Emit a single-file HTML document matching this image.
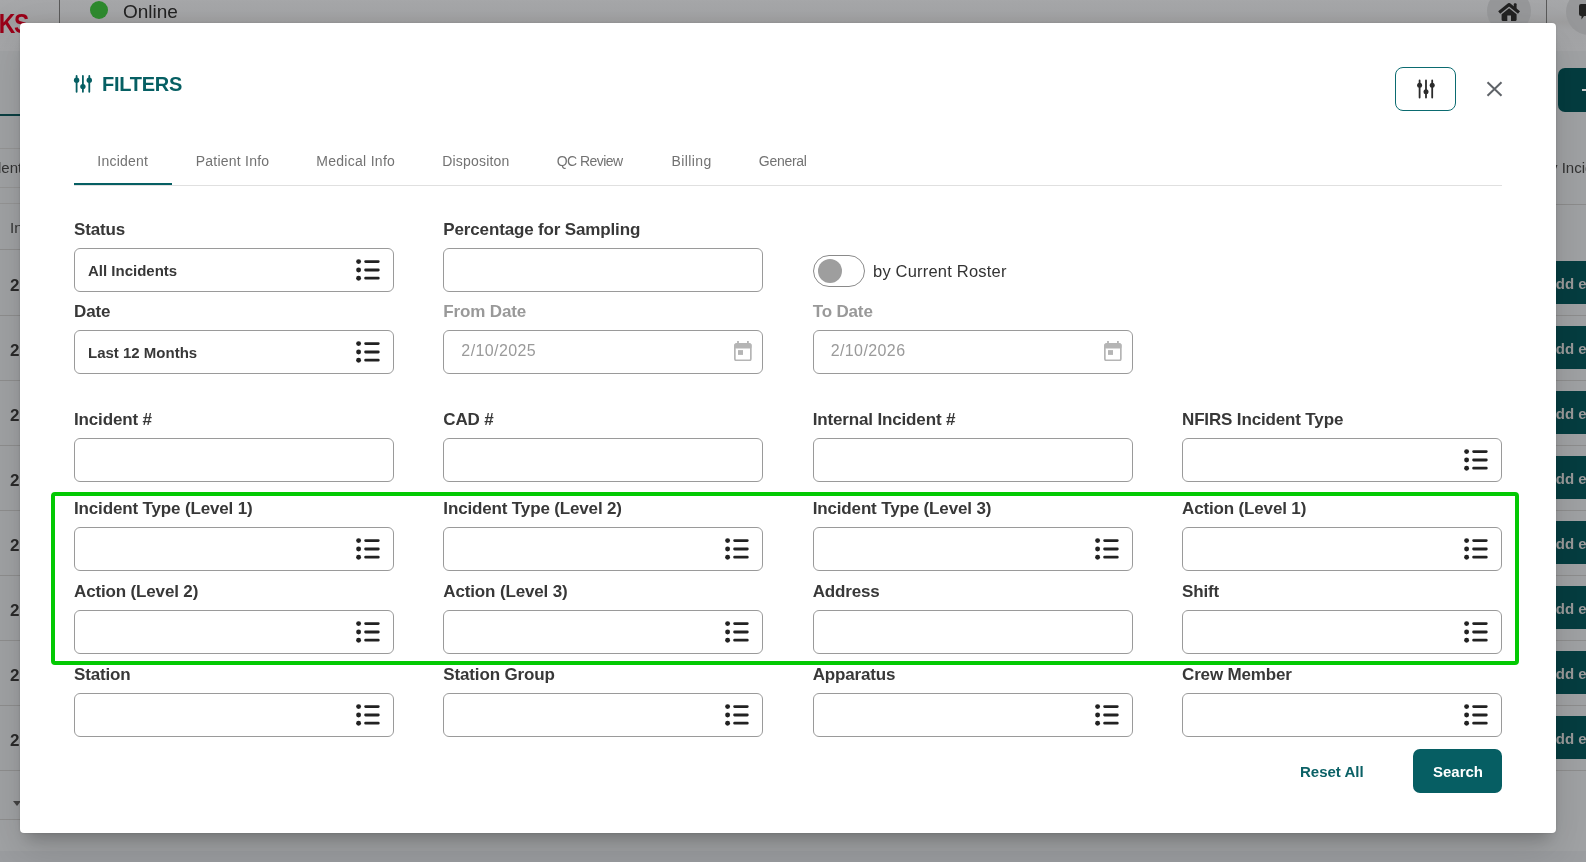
<!DOCTYPE html>
<html><head><meta charset="utf-8">
<style>
*{margin:0;padding:0;box-sizing:border-box}
html,body{width:1586px;height:862px;overflow:hidden}
body{position:relative;-webkit-font-smoothing:antialiased;background:#a0a2a4;font-family:"Liberation Sans",sans-serif;color:#333}
.abs{position:absolute;white-space:nowrap}
#modal{position:absolute;left:20px;top:23px;width:1536px;height:810px;background:#fff;border-radius:4px;box-shadow:0 11px 15px -7px rgba(0,0,0,.22),0 24px 38px 3px rgba(0,0,0,.07),0 9px 46px 8px rgba(0,0,0,.05),0 0 3px rgba(0,0,0,.12)}
#m{position:absolute;left:0;top:0;width:1586px;height:862px;will-change:transform}
.lab{position:absolute;font-size:17px;line-height:20px;font-weight:bold;letter-spacing:-0.15px;color:#383838;white-space:nowrap}
.lab.grey{color:#999}
.box{position:absolute;width:320px;height:44px;border:1px solid #9a9a9a;border-radius:6px;background:#fff}
.val{position:absolute;left:13px;top:12px;font-size:15px;line-height:20px;font-weight:bold;color:#383838;white-space:nowrap}
.dval{position:absolute;left:17px;top:10px;font-size:16px;letter-spacing:0.4px;line-height:20px;color:#9a9a9a;white-space:nowrap}
.li{position:absolute;left:281px;top:10px;fill:#222}
.cal{position:absolute;right:10px;top:10px}
.tab{position:absolute;top:151px;font-size:14px;line-height:20px;color:#727272;white-space:nowrap}
</style></head><body>
<div id="root" style="position:absolute;left:0;top:0;width:1586px;height:862px;will-change:transform">
<!-- background page -->
<div class="abs" style="left:0;top:0;width:1586px;height:51px;background:linear-gradient(#a7a8aa 0px,#a4a5a7 12px,#9e9e9f 22px,#a3a4a6 30px,#a5a6a8 51px)"></div>
<div class="abs" style="left:59px;top:0;width:1px;height:23px;background:#5a5a5a"></div>
<div class="abs" style="left:-6px;top:9px;font-size:27px;font-weight:bold;color:#9a0018;line-height:30px;letter-spacing:-1.5px;transform:scaleX(0.85);transform-origin:right top;width:32px;text-align:right">KS</div>
<div class="abs" style="left:90px;top:1px;width:18px;height:18px;border-radius:50%;background:#2e8a2e"></div>
<div class="abs" style="left:123px;top:1px;font-size:19px;line-height:22px;color:#222">Online</div>
<div class="abs" style="left:1487px;top:-11px;width:44px;height:44px;border-radius:50%;background:#97989a"></div>
<svg class="abs" style="left:1498px;top:3px" width="22" height="19" viewBox="0 0 22 19"><path d="M1.2 9.6L11.1 1.6L21 9.6" fill="none" stroke="#222" stroke-width="3.2" stroke-linecap="butt" stroke-linejoin="round"/><rect x="15.8" y="0.2" width="2.8" height="6.2" rx="1" fill="#222"/><path d="M3.6 11.2L11.1 5.2L18.6 11.2V16.8Q18.6 17.9 17.5 17.9H13V12.5H9.3V17.9H4.7Q3.6 17.9 3.6 16.8Z" fill="#222"/></svg>
<div class="abs" style="left:1546px;top:0;width:1px;height:23px;background:#5a5a5a"></div>
<div class="abs" style="left:1566px;top:-11px;width:46px;height:46px;border-radius:50%;background:#97989a"></div>
<svg class="abs" style="left:1578px;top:3px" width="10" height="17" viewBox="0 0 10 17"><path d="M3 1H10V13H6L3.5 16.5V13H3Q1 13 1 11V3Q1 1 3 1Z" fill="#222"/></svg>
<!-- left strip -->
<div class="abs" style="left:0;top:114px;width:20px;height:2px;background:#0b3f42"></div>
<div class="abs" style="left:0;top:148px;width:20px;height:1px;background:#959595"></div>
<div class="abs" style="left:-2px;top:159px;font-size:15px;line-height:18px;color:#333">lent</div>
<div class="abs" style="left:0;top:187px;width:20px;height:1px;background:#959595"></div>
<div class="abs" style="left:0;top:203px;width:20px;height:1px;background:#959595"></div>
<div class="abs" style="left:10px;top:219px;font-size:15px;line-height:18px;color:#333">In</div>
<div class="abs" style="left:0;top:249px;width:20px;height:1px;background:#8e8e8e"></div>
<div class="abs" style="left:10px;top:276px;font-size:17px;line-height:20px;font-weight:bold;color:#2a2a2a">2</div>
<div class="abs" style="left:0;top:315px;width:20px;height:1px;background:#8e8e8e"></div>
<div class="abs" style="left:1556px;top:261px;width:40px;height:43px;background:#053d40"></div>
<div class="abs" style="left:1545px;top:274px;font-size:15px;line-height:20px;font-weight:bold;color:#9a9a9a">Add e</div>
<div class="abs" style="left:1556px;top:315px;width:30px;height:1px;background:#8e8e8e"></div>
<div class="abs" style="left:10px;top:341px;font-size:17px;line-height:20px;font-weight:bold;color:#2a2a2a">2</div>
<div class="abs" style="left:0;top:380px;width:20px;height:1px;background:#8e8e8e"></div>
<div class="abs" style="left:1556px;top:326px;width:40px;height:43px;background:#053d40"></div>
<div class="abs" style="left:1545px;top:339px;font-size:15px;line-height:20px;font-weight:bold;color:#9a9a9a">Add e</div>
<div class="abs" style="left:1556px;top:380px;width:30px;height:1px;background:#8e8e8e"></div>
<div class="abs" style="left:10px;top:406px;font-size:17px;line-height:20px;font-weight:bold;color:#2a2a2a">2</div>
<div class="abs" style="left:0;top:445px;width:20px;height:1px;background:#8e8e8e"></div>
<div class="abs" style="left:1556px;top:391px;width:40px;height:43px;background:#053d40"></div>
<div class="abs" style="left:1545px;top:404px;font-size:15px;line-height:20px;font-weight:bold;color:#9a9a9a">Add e</div>
<div class="abs" style="left:1556px;top:445px;width:30px;height:1px;background:#8e8e8e"></div>
<div class="abs" style="left:10px;top:471px;font-size:17px;line-height:20px;font-weight:bold;color:#2a2a2a">2</div>
<div class="abs" style="left:0;top:510px;width:20px;height:1px;background:#8e8e8e"></div>
<div class="abs" style="left:1556px;top:456px;width:40px;height:43px;background:#053d40"></div>
<div class="abs" style="left:1545px;top:469px;font-size:15px;line-height:20px;font-weight:bold;color:#9a9a9a">Add e</div>
<div class="abs" style="left:1556px;top:510px;width:30px;height:1px;background:#8e8e8e"></div>
<div class="abs" style="left:10px;top:536px;font-size:17px;line-height:20px;font-weight:bold;color:#2a2a2a">2</div>
<div class="abs" style="left:0;top:575px;width:20px;height:1px;background:#8e8e8e"></div>
<div class="abs" style="left:1556px;top:521px;width:40px;height:43px;background:#053d40"></div>
<div class="abs" style="left:1545px;top:534px;font-size:15px;line-height:20px;font-weight:bold;color:#9a9a9a">Add e</div>
<div class="abs" style="left:1556px;top:575px;width:30px;height:1px;background:#8e8e8e"></div>
<div class="abs" style="left:10px;top:601px;font-size:17px;line-height:20px;font-weight:bold;color:#2a2a2a">2</div>
<div class="abs" style="left:0;top:640px;width:20px;height:1px;background:#8e8e8e"></div>
<div class="abs" style="left:1556px;top:586px;width:40px;height:43px;background:#053d40"></div>
<div class="abs" style="left:1545px;top:599px;font-size:15px;line-height:20px;font-weight:bold;color:#9a9a9a">Add e</div>
<div class="abs" style="left:1556px;top:640px;width:30px;height:1px;background:#8e8e8e"></div>
<div class="abs" style="left:10px;top:666px;font-size:17px;line-height:20px;font-weight:bold;color:#2a2a2a">2</div>
<div class="abs" style="left:0;top:705px;width:20px;height:1px;background:#8e8e8e"></div>
<div class="abs" style="left:1556px;top:651px;width:40px;height:43px;background:#053d40"></div>
<div class="abs" style="left:1545px;top:664px;font-size:15px;line-height:20px;font-weight:bold;color:#9a9a9a">Add e</div>
<div class="abs" style="left:1556px;top:705px;width:30px;height:1px;background:#8e8e8e"></div>
<div class="abs" style="left:10px;top:731px;font-size:17px;line-height:20px;font-weight:bold;color:#2a2a2a">2</div>
<div class="abs" style="left:0;top:770px;width:20px;height:1px;background:#8e8e8e"></div>
<div class="abs" style="left:1556px;top:716px;width:40px;height:43px;background:#053d40"></div>
<div class="abs" style="left:1545px;top:729px;font-size:15px;line-height:20px;font-weight:bold;color:#9a9a9a">Add e</div>
<div class="abs" style="left:1556px;top:770px;width:30px;height:1px;background:#8e8e8e"></div>

<div class="abs" style="left:0;top:819px;width:20px;height:1px;background:#8e8e8e"></div>
<div class="abs" style="left:13px;top:801px;width:0;height:0;border-left:4px solid transparent;border-right:4px solid transparent;border-top:5px solid #444"></div>
<!-- right strip -->
<div class="abs" style="left:1558px;top:68px;width:40px;height:44px;border-radius:7px;background:#053d40"></div>
<div class="abs" style="left:1582px;top:89px;width:6px;height:2px;background:#ccc"></div>
<div class="abs" style="left:1550px;top:159px;font-size:15px;line-height:18px;color:#333">y Incid</div>
<div class="abs" style="left:1556px;top:204px;width:30px;height:1px;background:#8e8e8e"></div>

<div class="abs" style="left:0;top:851px;width:1586px;height:11px;background:#9b9da0"></div>
<div id="modal"></div>
<div id="m">
<!-- header -->
<svg class="abs" style="left:73px;top:74px" width="20" height="20" viewBox="0 0 20 20">
<g stroke="#065f63" stroke-width="1.8" stroke-linecap="round"><path d="M3.6 2.0V17.8M9.9 2.0V17.8M16.3 2.0V17.8"/></g>
<g fill="#065f63"><circle cx="3.6" cy="6.2" r="2.7"/><circle cx="9.9" cy="12.6" r="2.7"/><circle cx="16.3" cy="6.2" r="2.7"/></g></svg>
<div class="abs" style="left:102px;top:73px;font-size:20px;line-height:22px;font-weight:bold;color:#065f63;letter-spacing:-0.25px">FILTERS</div>
<div class="abs" style="left:1395px;top:67px;width:61px;height:44px;border:1px solid #0b6b70;border-radius:8px"></div>
<svg class="abs" style="left:1416px;top:78px" width="20" height="22" viewBox="0 0 20 22">
<g stroke="#2b2b2b" stroke-width="1.8" stroke-linecap="round"><path d="M3.6 2.5V19.5M10 2.5V19.5M16.2 2.5V19.5"/></g>
<g fill="#2b2b2b"><circle cx="3.6" cy="7.2" r="2.5"/><circle cx="10" cy="13.8" r="2.5"/><circle cx="16.2" cy="7.2" r="2.5"/></g></svg>
<svg class="abs" style="left:1486px;top:81px" width="17" height="16" viewBox="0 0 17 16">
<path d="M1.5 1.2L15.5 14.8M15.5 1.2L1.5 14.8" stroke="#5f6368" stroke-width="2"/></svg>
<!-- tabs -->
<div class="tab" style="left:97.3px;letter-spacing:0.23px">Incident</div>
<div class="tab" style="left:195.7px;letter-spacing:0.24px">Patient Info</div>
<div class="tab" style="left:316.2px;letter-spacing:0.29px">Medical Info</div>
<div class="tab" style="left:442.2px;letter-spacing:0.20px">Dispositon</div>
<div class="tab" style="left:556.8px;letter-spacing:-0.57px">QC Review</div>
<div class="tab" style="left:671.4px;letter-spacing:0.43px">Billing</div>
<div class="tab" style="left:758.8px;letter-spacing:-0.27px">General</div>
<div class="abs" style="left:74px;top:185px;width:1428px;height:1px;background:#e0e0e0"></div>
<div class="abs" style="left:74px;top:183px;width:98px;height:2px;background:#065f63"></div>
<!-- fields -->
<div class="lab" style="left:74px;top:219.6px">Status</div>
<div class="box" style="left:74px;top:248px"><div class="val">All Incidents</div><svg class="li" width="26" height="22" viewBox="0 0 26 22"><circle cx="2.6" cy="2.6" r="2.45"/><circle cx="2.6" cy="11" r="2.45"/><circle cx="2.6" cy="19.2" r="2.45"/><path d="M9.6 2.6H22.3M9.6 11H22.3M9.6 19.2H22.3" stroke="#222" stroke-width="2.8" stroke-linecap="round"/></svg></div>
<div class="lab" style="left:443.33px;top:219.6px">Percentage for Sampling</div>
<div class="box" style="left:443.33px;top:248px"></div>
<div class="lab" style="left:74px;top:301.6px">Date</div>
<div class="box" style="left:74px;top:330px"><div class="val">Last 12 Months</div><svg class="li" width="26" height="22" viewBox="0 0 26 22"><circle cx="2.6" cy="2.6" r="2.45"/><circle cx="2.6" cy="11" r="2.45"/><circle cx="2.6" cy="19.2" r="2.45"/><path d="M9.6 2.6H22.3M9.6 11H22.3M9.6 19.2H22.3" stroke="#222" stroke-width="2.8" stroke-linecap="round"/></svg></div>
<div class="lab grey" style="left:443.33px;top:301.6px">From Date</div>
<div class="box" style="left:443.33px;top:330px"><div class="dval">2/10/2025</div><svg class="cal" width="18" height="20" viewBox="0 0 18 20"><rect x="0.85" y="2.85" width="16" height="16.6" rx="1.8" fill="none" stroke="#b5b5b5" stroke-width="1.7"/><rect x="0.5" y="2.5" width="17" height="5" rx="1.5" fill="#b5b5b5"/><rect x="3.1" y="0" width="1.8" height="3" fill="#b5b5b5"/><rect x="13" y="0" width="1.8" height="3" fill="#b5b5b5"/><rect x="4" y="9.1" width="5" height="4.8" fill="#b5b5b5"/></svg></div>
<div class="lab grey" style="left:812.67px;top:301.6px">To Date</div>
<div class="box" style="left:812.67px;top:330px"><div class="dval">2/10/2026</div><svg class="cal" width="18" height="20" viewBox="0 0 18 20"><rect x="0.85" y="2.85" width="16" height="16.6" rx="1.8" fill="none" stroke="#b5b5b5" stroke-width="1.7"/><rect x="0.5" y="2.5" width="17" height="5" rx="1.5" fill="#b5b5b5"/><rect x="3.1" y="0" width="1.8" height="3" fill="#b5b5b5"/><rect x="13" y="0" width="1.8" height="3" fill="#b5b5b5"/><rect x="4" y="9.1" width="5" height="4.8" fill="#b5b5b5"/></svg></div>
<div class="lab" style="left:74px;top:409.6px">Incident #</div>
<div class="box" style="left:74px;top:438px"></div>
<div class="lab" style="left:443.33px;top:409.6px">CAD #</div>
<div class="box" style="left:443.33px;top:438px"></div>
<div class="lab" style="left:812.67px;top:409.6px">Internal Incident #</div>
<div class="box" style="left:812.67px;top:438px"></div>
<div class="lab" style="left:1182px;top:409.6px">NFIRS Incident Type</div>
<div class="box" style="left:1182px;top:438px"><svg class="li" width="26" height="22" viewBox="0 0 26 22"><circle cx="2.6" cy="2.6" r="2.45"/><circle cx="2.6" cy="11" r="2.45"/><circle cx="2.6" cy="19.2" r="2.45"/><path d="M9.6 2.6H22.3M9.6 11H22.3M9.6 19.2H22.3" stroke="#222" stroke-width="2.8" stroke-linecap="round"/></svg></div>
<div class="lab" style="left:74px;top:498.6px">Incident Type (Level 1)</div>
<div class="box" style="left:74px;top:527px"><svg class="li" width="26" height="22" viewBox="0 0 26 22"><circle cx="2.6" cy="2.6" r="2.45"/><circle cx="2.6" cy="11" r="2.45"/><circle cx="2.6" cy="19.2" r="2.45"/><path d="M9.6 2.6H22.3M9.6 11H22.3M9.6 19.2H22.3" stroke="#222" stroke-width="2.8" stroke-linecap="round"/></svg></div>
<div class="lab" style="left:443.33px;top:498.6px">Incident Type (Level 2)</div>
<div class="box" style="left:443.33px;top:527px"><svg class="li" width="26" height="22" viewBox="0 0 26 22"><circle cx="2.6" cy="2.6" r="2.45"/><circle cx="2.6" cy="11" r="2.45"/><circle cx="2.6" cy="19.2" r="2.45"/><path d="M9.6 2.6H22.3M9.6 11H22.3M9.6 19.2H22.3" stroke="#222" stroke-width="2.8" stroke-linecap="round"/></svg></div>
<div class="lab" style="left:812.67px;top:498.6px">Incident Type (Level 3)</div>
<div class="box" style="left:812.67px;top:527px"><svg class="li" width="26" height="22" viewBox="0 0 26 22"><circle cx="2.6" cy="2.6" r="2.45"/><circle cx="2.6" cy="11" r="2.45"/><circle cx="2.6" cy="19.2" r="2.45"/><path d="M9.6 2.6H22.3M9.6 11H22.3M9.6 19.2H22.3" stroke="#222" stroke-width="2.8" stroke-linecap="round"/></svg></div>
<div class="lab" style="left:1182px;top:498.6px">Action (Level 1)</div>
<div class="box" style="left:1182px;top:527px"><svg class="li" width="26" height="22" viewBox="0 0 26 22"><circle cx="2.6" cy="2.6" r="2.45"/><circle cx="2.6" cy="11" r="2.45"/><circle cx="2.6" cy="19.2" r="2.45"/><path d="M9.6 2.6H22.3M9.6 11H22.3M9.6 19.2H22.3" stroke="#222" stroke-width="2.8" stroke-linecap="round"/></svg></div>
<div class="lab" style="left:74px;top:581.6px">Action (Level 2)</div>
<div class="box" style="left:74px;top:610px"><svg class="li" width="26" height="22" viewBox="0 0 26 22"><circle cx="2.6" cy="2.6" r="2.45"/><circle cx="2.6" cy="11" r="2.45"/><circle cx="2.6" cy="19.2" r="2.45"/><path d="M9.6 2.6H22.3M9.6 11H22.3M9.6 19.2H22.3" stroke="#222" stroke-width="2.8" stroke-linecap="round"/></svg></div>
<div class="lab" style="left:443.33px;top:581.6px">Action (Level 3)</div>
<div class="box" style="left:443.33px;top:610px"><svg class="li" width="26" height="22" viewBox="0 0 26 22"><circle cx="2.6" cy="2.6" r="2.45"/><circle cx="2.6" cy="11" r="2.45"/><circle cx="2.6" cy="19.2" r="2.45"/><path d="M9.6 2.6H22.3M9.6 11H22.3M9.6 19.2H22.3" stroke="#222" stroke-width="2.8" stroke-linecap="round"/></svg></div>
<div class="lab" style="left:812.67px;top:581.6px">Address</div>
<div class="box" style="left:812.67px;top:610px"></div>
<div class="lab" style="left:1182px;top:581.6px">Shift</div>
<div class="box" style="left:1182px;top:610px"><svg class="li" width="26" height="22" viewBox="0 0 26 22"><circle cx="2.6" cy="2.6" r="2.45"/><circle cx="2.6" cy="11" r="2.45"/><circle cx="2.6" cy="19.2" r="2.45"/><path d="M9.6 2.6H22.3M9.6 11H22.3M9.6 19.2H22.3" stroke="#222" stroke-width="2.8" stroke-linecap="round"/></svg></div>
<div class="lab" style="left:74px;top:664.6px">Station</div>
<div class="box" style="left:74px;top:693px"><svg class="li" width="26" height="22" viewBox="0 0 26 22"><circle cx="2.6" cy="2.6" r="2.45"/><circle cx="2.6" cy="11" r="2.45"/><circle cx="2.6" cy="19.2" r="2.45"/><path d="M9.6 2.6H22.3M9.6 11H22.3M9.6 19.2H22.3" stroke="#222" stroke-width="2.8" stroke-linecap="round"/></svg></div>
<div class="lab" style="left:443.33px;top:664.6px">Station Group</div>
<div class="box" style="left:443.33px;top:693px"><svg class="li" width="26" height="22" viewBox="0 0 26 22"><circle cx="2.6" cy="2.6" r="2.45"/><circle cx="2.6" cy="11" r="2.45"/><circle cx="2.6" cy="19.2" r="2.45"/><path d="M9.6 2.6H22.3M9.6 11H22.3M9.6 19.2H22.3" stroke="#222" stroke-width="2.8" stroke-linecap="round"/></svg></div>
<div class="lab" style="left:812.67px;top:664.6px">Apparatus</div>
<div class="box" style="left:812.67px;top:693px"><svg class="li" width="26" height="22" viewBox="0 0 26 22"><circle cx="2.6" cy="2.6" r="2.45"/><circle cx="2.6" cy="11" r="2.45"/><circle cx="2.6" cy="19.2" r="2.45"/><path d="M9.6 2.6H22.3M9.6 11H22.3M9.6 19.2H22.3" stroke="#222" stroke-width="2.8" stroke-linecap="round"/></svg></div>
<div class="lab" style="left:1182px;top:664.6px">Crew Member</div>
<div class="box" style="left:1182px;top:693px"><svg class="li" width="26" height="22" viewBox="0 0 26 22"><circle cx="2.6" cy="2.6" r="2.45"/><circle cx="2.6" cy="11" r="2.45"/><circle cx="2.6" cy="19.2" r="2.45"/><path d="M9.6 2.6H22.3M9.6 11H22.3M9.6 19.2H22.3" stroke="#222" stroke-width="2.8" stroke-linecap="round"/></svg></div>
<!-- toggle -->
<div class="abs" style="left:813px;top:255px;width:52px;height:32px;border:1px solid #8a8a8a;border-radius:16px"></div>
<div class="abs" style="left:818px;top:259px;width:24px;height:24px;border-radius:50%;background:#9e9e9e"></div>
<div class="abs" style="left:873px;top:261px;font-size:16.5px;letter-spacing:0.2px;line-height:20px;color:#333;white-space:nowrap">by Current Roster</div>
<!-- green highlight -->
<div class="abs" style="left:51px;top:492px;width:1468px;height:173px;border:4px solid #03c903;border-radius:4px"></div>
<!-- buttons -->
<div class="abs" style="left:1300px;top:762px;font-size:15px;line-height:20px;font-weight:bold;color:#0b6166;white-space:nowrap">Reset All</div>
<div class="abs" style="left:1413px;top:749px;width:89px;height:44px;border-radius:7px;background:#065e63"></div>
<div class="abs" style="left:1433px;top:762px;font-size:15px;line-height:20px;font-weight:bold;color:#fff;white-space:nowrap">Search</div>
</div>
</div>
</body></html>
